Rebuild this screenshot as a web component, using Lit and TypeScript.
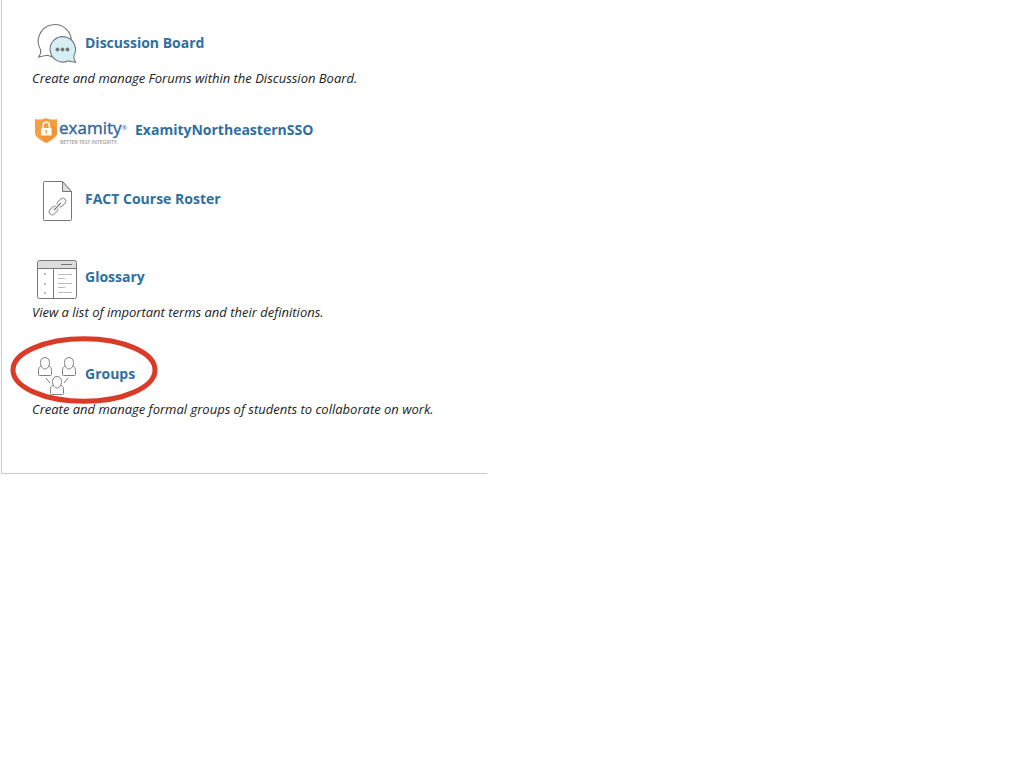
import { LitElement, html, css, svg, nothing, TemplateResult } from "lit";
import { customElement } from "lit/decorators.js";

interface Tool {
  name: string;
  icon: TemplateResult;
  description?: string;
  kind?: string;
  ringed?: boolean;
}

const discussionIcon = html`
  <svg class="icon" viewBox="0 0 50 50" aria-hidden="true">
    <g stroke="#777" stroke-width="1.1" stroke-linejoin="round">
      <path fill="#fff" d="M6.500 39.300 C8 36.500 9.500 34.500 8.600 31.800 A16.600 16.600 0 1 1 39.300 25 L24 39 C20.500 39.300 18 38.500 15.500 37.300 C12 38 9.500 38 6.500 39.300 Z" />
      <path fill="#d5f0f4" d="M43.700 44.500 C40.500 43.500 38.500 44 36.500 42.700 A12.700 12.700 0 1 1 41.900 37.500 C41.500 40 42.500 42.500 43.700 44.500 Z" />
    </g>
    <g fill="#777"><circle cx="25.500" cy="31.500" r="1.900" /><circle cx="30.500" cy="31.500" r="1.900" /><circle cx="35.500" cy="31.500" r="1.900" /></g>
  </svg>`;

const examityIcon = html`
  <svg class="logo" viewBox="0 0 100 33" role="img" aria-label="examity">
    <path fill="#f4a041" d="M3 4 Q9 5.500 14 3 Q19 5.500 25 4 V19 Q24 23 14 28 Q4 23 3 19 Z" />
    <path fill="#ed8a2e" d="M20 9 L25 14 V19 Q24 23 14 28 L9 20 H20 Z" opacity=".55" />
    <path fill="none" stroke="#fff" stroke-width="1.500" d="M11 13 V10.500 A3.200 3.200 0 0 1 17.400 10.500 V13" />
    <rect x="9" y="13" width="10.500" height="7.500" fill="#fff" />
    <path stroke="#f4a041" stroke-width="1.400" d="M14.200 15 V18.500" />
    <text x="27" y="19" font-size="17" font-weight="500" fill="#34659b" stroke="#34659b" stroke-width=".4">examity</text>
    <text x="90" y="15" font-size="6" font-weight="600" fill="#34659b">®</text>
    <text x="28" y="28.500" font-size="5" font-weight="600" fill="#999">BETTER TEST INTEGRITY.</text>
  </svg>`;

const fileIcon = html`
  <svg class="icon" viewBox="0 0 50 50" aria-hidden="true">
    <path fill="#fff" stroke="#777" d="M12.500 7.500 H30.500 L39.500 17.500 V45.500 Q39.500 46.500 38.500 46.500 H12.500 Q11.500 46.500 11.500 45.500 V8.500 Q11.500 7.500 12.500 7.500 Z" />
    <path fill="#ddd" stroke="#777" d="M30.500 7.500 V17.500 H39.500 Z" />
    <g fill="none" stroke="#999" transform="rotate(-45 25.500 32.500)">
      <path d="M22 35.500 H18 A3 3 0 0 1 18 29.500 H22 A3 3 0 0 1 24.500 31" />
      <path d="M22 35.500 A3 3 0 0 0 24.500 34" />
      <path d="M29 35.500 H33 A3 3 0 0 0 33 29.500 H29 A3 3 0 0 0 26.500 31" />
      <path d="M29 35.500 A3 3 0 0 1 26.500 34" />
      <path stroke="#666" d="M20.500 32.500 H30.500" />
    </g>
  </svg>`;

const glossaryIcon = html`
  <svg class="icon" viewBox="0 0 50 50" aria-hidden="true">
    <rect x="5.500" y="8.500" width="39" height="38" rx="2" fill="#fff" />
    <path fill="#ddd" d="M5.500 16.500 V10.500 Q5.500 8.500 7.500 8.500 H42.500 Q44.500 8.500 44.500 10.500 V16.500 Z" />
    <g fill="none" stroke="#777">
      <rect x="5.500" y="8.500" width="39" height="38" rx="2" />
      <path d="M5.500 16.500 H44.500 M21.500 16.500 V46.500 M29 12.500 H40" />
    </g>
    <path stroke="#bbb" d="M26 22.500 H40 M26 26.500 H33 M26 31.500 H40 M26 35.500 H33 M26 40.500 H40" />
    <path stroke="#bbb" stroke-width="2" d="M12 22 H14 M12 32 H14 M12 41 H14" />
  </svg>`;

const person = (x: number, y: number) => svg`
  <g transform="translate(${x} ${y})">
    <path d="M4 9 C1.500 9.500 .5 11 .5 13.500 V17.500 Q.5 18.500 1.500 18.500 H12.500 Q13.500 18.500 13.500 17.500 V13.500 C13.500 11 12.500 9.500 10 9" />
    <path d="M7 .5 C4 .5 2.500 2.800 2.500 5.500 C2.500 9 4.500 12 7 12 C9.500 12 11.500 9 11.500 5.500 C11.500 2.800 10 .5 7 .5 Z" />
  </g>`;

const groupsIcon = html`
  <svg class="icon" viewBox="0 0 50 50" aria-hidden="true">
    <g fill="#fff" stroke="#808080">
      ${person(6, 8)} ${person(30, 8)} ${person(18, 27)}
      <path d="M14 29 L18 34 M36 29 L32 34" />
    </g>
  </svg>`;

const tools: Tool[] = [
  { name: "Discussion Board", icon: discussionIcon, description: "Create and manage Forums within the Discussion Board." },
  { name: "ExamityNortheasternSSO", icon: examityIcon, kind: "branded" },
  { name: "FACT Course Roster", icon: fileIcon, kind: "plain" },
  { name: "Glossary", icon: glossaryIcon, description: "View a list of important terms and their definitions." },
  { name: "Groups", icon: groupsIcon, description: "Create and manage formal groups of students to collaborate on work.", ringed: true },
];

@customElement("app-root")
export class AppRoot extends LitElement {
  static styles = css`
    :host {
      display: block;
      min-height: 100vh;
      background: #fff;
      font-family: "Open Sans", sans-serif;
      color: #222;
    }
    .panel {
      width: 47.5%;
      box-sizing: border-box;
      margin-left: 1px;
      padding: 18px 30px 53px;
      border-left: 1px solid #ccc;
      border-bottom: 1px solid #ccc;
    }
    .tools {
      display: flex;
      flex-direction: column;
      gap: 26px;
      margin: 0;
      padding: 0;
      list-style: none;
    }
    .tool { position: relative; }
    .plain { min-height: 52px; }
    .head {
      display: flex;
      align-items: center;
      gap: 3px;
    }
    .branded .head { align-items: flex-start; }
    .branded .title { padding-top: 5px; }
    .title {
      margin: 0;
      font-size: 14px;
      line-height: 20px;
      font-weight: 700;
    }
    .link { color: #2f6f9f; text-decoration: none; }
    .icon { flex: none; width: 50px; height: 50px; }
    .logo { flex: none; width: 100px; height: 33px; }
    .description {
      margin: 0;
      font-size: 13px;
      line-height: 21px;
      font-style: italic;
    }
    .ring {
      position: absolute;
      left: -22px;
      top: -14px;
      width: 148px;
      height: 70px;
      pointer-events: none;
    }
  `;

  render() {
    return html`
      <main class="panel">
        <ul class="tools">
          ${tools.map(
            (tool) => html`
              <li class="tool ${tool.kind ?? ""}">
                <div class="head">
                  ${tool.icon}
                  <h3 class="title"><a class="link" href="#">${tool.name}</a></h3>
                </div>
                ${tool.description ? html`<p class="description">${tool.description}</p>` : nothing}
                ${tool.ringed
                  ? html`<svg class="ring" viewBox="0 0 148 70" aria-hidden="true">
                      <ellipse cx="74" cy="35" rx="71" ry="31.300" fill="none" stroke="#db3a26" stroke-width="5" />
                    </svg>`
                  : nothing}
              </li>
            `
          )}
        </ul>
      </main>
    `;
  }
}
